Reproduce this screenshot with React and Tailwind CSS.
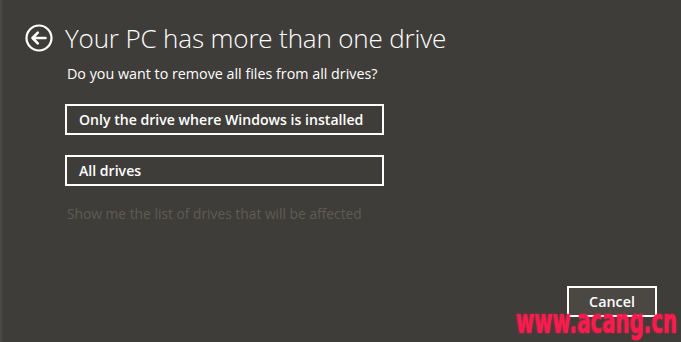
import React from 'react';

const BackIcon = () => (
    <svg width="30" height="30" viewBox="0 0 30 30" className="shrink-0">
        <circle cx="15" cy="15" r="12.5" fill="none" stroke="#ffffff" strokeWidth="2.2" />
        <path d="M8.5 15 H21.5 M8.5 15 L13.8 9.7 M8.5 15 L13.8 20.3" fill="none" stroke="#ffffff" strokeWidth="2.6" strokeLinecap="round" strokeLinejoin="round" />
    </svg>
);

const App = () => {
    return (
        <div
            className="relative w-[681px] h-[342px] bg-[#3f3d39] overflow-hidden text-white"
            style={{ fontFamily: '"Open Sans", "Noto Sans", sans-serif' }}
        >
            <div className="absolute left-0 top-0 w-[2px] h-full bg-[#4a4845]" />

            {/* header */}
            <div className="flex items-center pl-[24px] pt-[23px] h-[53px] gap-[11px]">
                <BackIcon />
                <h1 className="text-[26px] font-light leading-[30px] tracking-[-0.15px]">Your PC has more than one drive</h1>
            </div>

            <div className="pl-[67px]">
                <p className="mt-[11px] h-[20px] text-[14.3px] leading-[20px]">Do you want to remove all files from all drives?</p>

                <div className="-ml-[2px]">
                    <button className="block mt-[20px] w-[319px] h-[31px] border-2 border-white text-left pl-[12px] text-[14.1px] font-semibold leading-[27px]">
                        Only the drive where Windows is installed
                    </button>
                    <button className="block mt-[20px] w-[319px] h-[31px] border-2 border-white text-left pl-[12px] text-[14.1px] font-semibold leading-[27px]">
                        All drives
                    </button>
                </div>

                <p className="mt-[18px] h-[20px] text-[13.8px] leading-[20px] text-[#5e5b56]">Show me the list of drives that will be affected</p>
            </div>

            {/* footer */}
            <div className="absolute right-[24px] top-[286px]">
                <button className="w-[90px] h-[31px] border-2 border-white bg-[#4b4844] text-[14.3px] font-semibold leading-[27px]">
                    Cancel
                </button>
            </div>

            {/* watermark */}
            <div
                className="absolute left-[516px] top-[311px] text-[33px] font-bold text-[#ff1a4e] leading-[22px] whitespace-nowrap origin-left scale-x-[0.6]"
                style={{ fontFamily: '"DejaVu Sans", sans-serif', textShadow: '0 0 3px rgba(255,30,80,0.8)' }}
            >
                www.acang.cn
            </div>
        </div>
    );
};

export default App;
